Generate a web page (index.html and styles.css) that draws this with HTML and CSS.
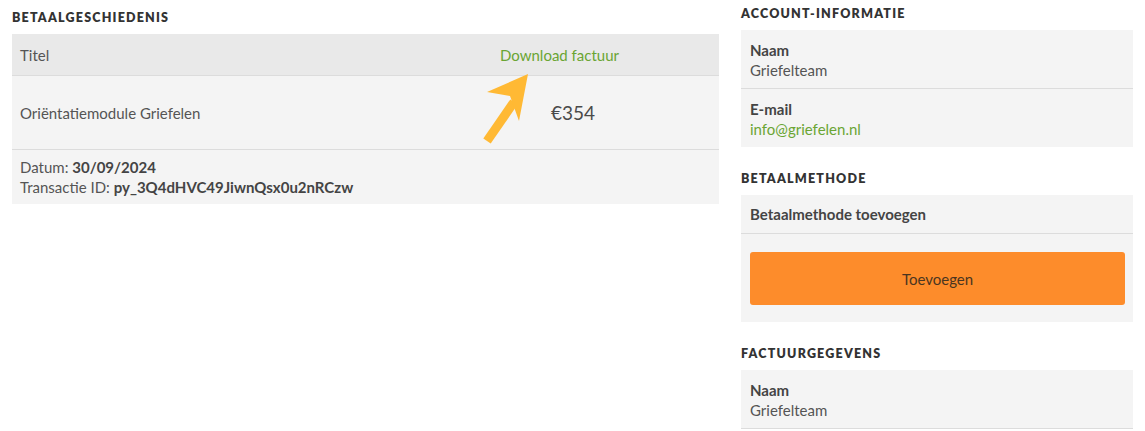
FILE: index.html
```html
<!DOCTYPE html>
<html lang="nl">
<head>
    <meta charset="UTF-8">
    <meta name="viewport" content="width=device-width, initial-scale=1.0">
    <title>Account</title>
    <link rel="stylesheet" href="styles.css">
</head>
<body>
    <div class="page">
        <!-- Betaalgeschiedenis -->
        <section class="history">
            <h2 class="section-title history-title">Betaalgeschiedenis</h2>
            <div class="table">
                <div class="row row-head">
                    <div class="cell">Titel</div>
                    <div class="cell cell-link"><a href="#">Download factuur</a></div>
                </div>
                <div class="row row-item">
                    <div class="cell">Oriëntatiemodule Griefelen</div>
                    <div class="cell cell-price">€354</div>
                </div>
                <div class="row-meta">
                    <div>Datum: <strong>30/09/2024</strong></div>
                    <div>Transactie ID: <strong>py_3Q4dHVC49JiwnQsx0u2nRCzw</strong></div>
                </div>
                <svg class="pointer" width="60" height="80" viewBox="0 0 60 80">
                    <line x1="7" y1="68" x2="34" y2="29" stroke="#ffb934" stroke-width="9"/>
                    <polygon points="48,1 7,19 30,23 39,48" fill="#ffb934"/>
                </svg>
            </div>
        </section>

        <!-- Zijkolom -->
        <aside class="side">
            <h2 class="section-title">Account-informatie</h2>
            <div class="card">
                <div class="item">
                    <div class="label">Naam</div>
                    <div>Griefelteam</div>
                </div>
                <div class="item">
                    <div class="label">E-mail</div>
                    <a href="#">info@griefelen.nl</a>
                </div>
            </div>

            <h2 class="section-title">Betaalmethode</h2>
            <div class="card">
                <div class="item item-single">
                    <div class="label">Betaalmethode toevoegen</div>
                </div>
                <div class="button-wrap">
                    <button class="add-button">Toevoegen</button>
                </div>
            </div>

            <h2 class="section-title">Factuurgegevens</h2>
            <div class="card">
                <div class="item">
                    <div class="label">Naam</div>
                    <div>Griefelteam</div>
                </div>
            </div>
        </aside>
    </div>
</body>
</html>
```

FILE: styles.css
```css
body {
    margin: 0;
    background: #fff;
    font-family: Lato, "Open Sans", sans-serif;
    font-size: 15px;
    color: #555;
}

a {
    color: #6aa533;
    text-decoration: none;
}

.page {
    display: flex;
    gap: 22px;
    padding: 0 12px 0 12px;
}

.history {
    width: 707px;
}

.side {
    width: 392px;
}

.section-title {
    margin: 0 0 8px;
    height: 16px;
    line-height: 16px;
    padding-top: 6px;
    font-size: 12.5px;
    font-weight: 800;
    letter-spacing: 1.2px;
    text-transform: uppercase;
    color: #333;
}

.side .card + .section-title {
    margin-top: 24px;
    padding-top: 0;
}

.history-title {
    padding-top: 10px;
    margin-bottom: 8px;
}

/* tabel */
.table {
    position: relative;
}

.row {
    display: grid;
    grid-template-columns: 480px 1fr;
    border-bottom: 1px solid #dcdcdc;
}

.row-head {
    background: #e9e9e9;
    height: 41px;
    align-items: center;
}

.row-item {
    background: #f4f4f4;
    height: 73px;
    align-items: center;
}

.cell {
    padding-left: 8px;
}

.cell-price {
    padding-left: 59px;
    font-size: 19px;
    color: #4a4a4a;
}

.row-meta {
    background: #f4f4f4;
    padding: 7px 8px 7px;
    line-height: 20px;
}

.row-meta strong {
    font-weight: 700;
    color: #444;
}

.pointer {
    position: absolute;
    left: 468px;
    top: 39px;
}

/* zijkolom */
.card {
    background: #f4f4f4;
}

.item {
    padding: 10px 9px 8px;
    line-height: 20px;
    border-bottom: 1px solid #dcdcdc;
}

.card .item:last-child {
    border-bottom: none;
}

.card:last-child .item:last-child {
    border-bottom: 1px solid #dcdcdc;
}

.item-single {
    padding: 9px 9px 9px;
}

.label {
    font-weight: 700;
    color: #444;
}

.button-wrap {
    padding: 18px 8px 17px 9px;
}

.add-button {
    display: block;
    width: 100%;
    height: 53px;
    border: none;
    border-radius: 3px;
    background: #fd8c2b;
    color: #4a3520;
    font-family: Lato, "Open Sans", sans-serif;
    font-size: 15px;
    cursor: pointer;
}
```
